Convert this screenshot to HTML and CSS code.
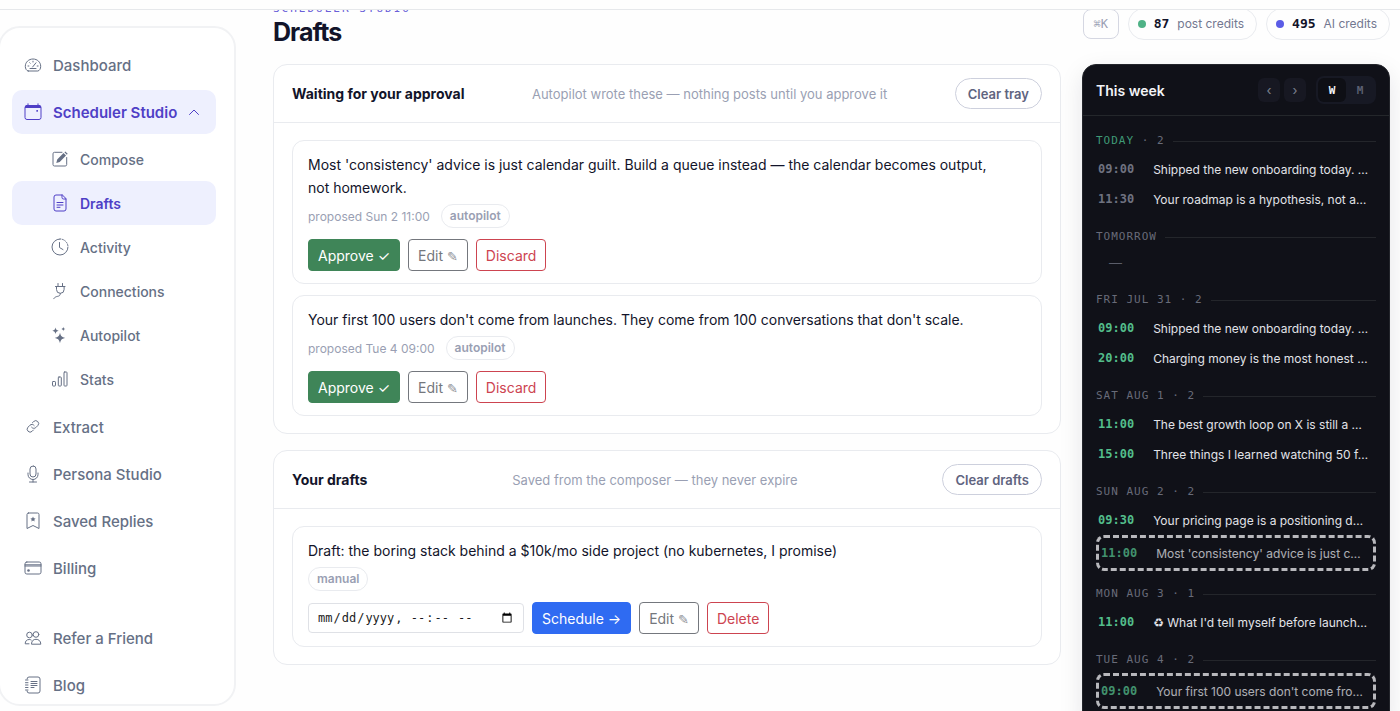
FILE: index.html
```
<!DOCTYPE html>
<html lang="en">

	<head>
		<meta charset="utf-8">
		<title>Drafts | Scheduler Studio</title>
		<meta name="viewport" content="width=device-width, initial-scale=1.0">

		<link rel="stylesheet" href="styles.css">
	</head>

	<body>

		<header class="topbar"></header>

		<div class="shell">

			<nav class="sidebar" aria-label="Main">
				<a class="nav-link" href="#dashboard">
					<svg class="icon" viewBox="0 0 18 18"><path d="M4.200 15h9.600c1.700-.2 2.900-2.300 2.900-4.700C16.700 6.200 13.300 3 9 3S1.300 6.200 1.300 10.300c0 2.400 1.200 4.500 2.900 4.700z"/><path d="M8.600 11 12 6.800M9 5.200v.8M5.700 6.700l.5.500M4 10h.9M13.200 10h.9M6 12.500h6"/></svg>
					Dashboard
				</a>
				<a class="nav-link active" href="#scheduler">
					<svg class="icon" viewBox="0 0 18 18"><rect x="1" y="2.500" width="16" height="14" rx="2"/><path class="solid" d="M1 5V4a2 2 0 0 1 2-2h12a2 2 0 0 1 2 2v1z"/><path d="M4 .8v2M14 .8v2"/><rect class="solid" x="12.300" y="7" width="1.700" height="1.700" rx=".4"/></svg>
					Scheduler Studio
					<svg class="chevron" viewBox="0 0 12 12"><path d="M1.500 8.500 6 4l4.500 4.500"/></svg>
				</a>
				<div class="subnav">
					<a class="nav-link" href="#compose">
						<svg class="icon" viewBox="0 0 18 18"><path d="M11 2.300H3.500a1.500 1.500 0 0 0-1.500 1.500v10.700A1.500 1.500 0 0 0 3.500 16h10.700a1.500 1.500 0 0 0 1.500-1.500V7.500"/><path class="solid" d="m5.300 12.900.9-3.500 6.300-6.300 2.500 2.500-6.300 6.300zM13.400 2.300l.9-.9 2.400 2.400-.9.900z"/></svg>
						Compose
					</a>
					<a class="nav-link active" href="#drafts">
						<svg class="icon" viewBox="0 0 18 18"><path d="M11 1H5a2 2 0 0 0-2 2v12a2 2 0 0 0 2 2h8a2 2 0 0 0 2-2V5z"/><path d="M11 1v2.500A1.500 1.500 0 0 0 12.500 5H15M6 8.500h6M6 11h6M6 13.300h3"/></svg>
						Drafts
					</a>
					<a class="nav-link" href="#activity">
						<svg class="icon" viewBox="0 0 18 18"><path d="M9 1a8 8 0 1 0 8 8"/><path stroke-dasharray="1 1.500" d="M9 1a8 8 0 0 1 8 8"/><path d="M8.500 4.500v5L12 11.600"/></svg>
						Activity
					</a>
					<a class="nav-link" href="#connections">
						<svg class="icon" viewBox="0 0 18 18"><path d="M7 1.500v3M11.500 1.500v3M4.500 4.500H14M5.500 4.500v3a3.800 3.800 0 0 0 7.600 0v-3M9.300 11.500c0 3-2 2.500-4 3.200-1.300.5-2 1-2.500 2"/></svg>
						Connections
					</a>
					<a class="nav-link" href="#autopilot">
						<svg class="icon" viewBox="0 0 18 18"><path class="solid" d="M9 6.800c.9 3.500 1.700 4.300 5.200 5.200-3.500.9-4.300 1.700-5.200 5.200-.9-3.500-1.700-4.300-5.200-5.200C7.300 11.100 8.100 10.300 9 6.800zM4.500 1.500c.5 2.200 1 2.700 3.200 3.300-2.200.6-2.700 1.100-3.200 3.300-.5-2.200-1-2.700-3.200-3.300 2.200-.6 2.700-1.100 3.200-3.300zM12.300.8c.3 1.400.7 1.800 2.100 2.200-1.400.4-1.800.8-2.100 2.200-.3-1.400-.7-1.800-2.100-2.200 1.400-.4 1.800-.8 2.100-2.200z"/></svg>
						Autopilot
					</a>
					<a class="nav-link" href="#stats">
						<svg class="icon" viewBox="0 0 18 18"><rect x="1.500" y="11.500" width="3" height="4.500" rx=".7"/><rect x="7.300" y="7" width="3" height="9" rx=".7"/><rect x="13" y="2" width="3" height="14" rx=".7"/></svg>
						Stats
					</a>
				</div>
				<a class="nav-link" href="#extract">
					<svg class="icon" viewBox="0 0 18 18"><path d="M7.600 9.300a2.800 2.800 0 0 0 4.200.3l2-2a2.900 2.900 0 0 0-4.100-4.100L8.400 4.800"/><path d="M10.200 7.500a2.800 2.800 0 0 0-4.200-.3L4 9.200a2.900 2.900 0 0 0 4.100 4.100l1.300-1.300"/></svg>
					Extract
				</a>
				<a class="nav-link" href="#persona">
					<svg class="icon" viewBox="0 0 18 18"><rect x="6" y="1" width="6" height="11" rx="3"/><path d="M4 8v1.500a5 5 0 0 0 10 0V8M9 14.500V17M5.500 17h7"/></svg>
					Persona Studio
				</a>
				<a class="nav-link" href="#replies">
					<svg class="icon" viewBox="0 0 18 18"><path d="M4.500 1h9A1.500 1.500 0 0 1 15 2.500V16.500l-6-3-6 3V2.500A1.500 1.500 0 0 1 4.500 1z"/><path class="solid" d="m9 4.500.8 1.700 1.800.2-1.300 1.300.3 1.800L9 8.600l-1.600.9.3-1.800-1.300-1.300 1.800-.2z"/></svg>
					Saved Replies
				</a>
				<a class="nav-link" href="#billing">
					<svg class="icon" viewBox="0 0 18 18"><rect x="1" y="3" width="16" height="12" rx="1.800"/><path d="M1 5.800h16M1 7h16"/><circle class="solid" cx="4.500" cy="11.500" r="1.300"/></svg>
					Billing
				</a>
				<a class="nav-link nav-break" href="#refer">
					<svg class="icon" viewBox="0 0 18 18"><circle cx="5.500" cy="6" r="2.800"/><circle cx="12" cy="5.500" r="2.800"/><path d="M7.500 14.800c0-3 2-4.500 4.500-4.500s4.800 1.500 4.800 4.500zM5 14.800H1.200c0-2.700 1.500-4.300 4-4.300.8 0 1.500.1 2 .5"/></svg>
					Refer a Friend
				</a>
				<a class="nav-link" href="#blog">
					<svg class="icon" viewBox="0 0 18 18"><path d="M3 3a2 2 0 0 1 2-2h9a2 2 0 0 1 2 2v12a2 2 0 0 1-2 2H5a2 2 0 0 1-2-2M1.500 4H4M1.500 6.700H4M1.500 9H4M1.500 11.500H4M1.500 14H4M7 5.500h6M7 7.500h6M7 9.500h6M7 11.500h3"/></svg>
					Blog
				</a>
			</nav>

			<main class="main">

				<div class="page-head">
					<div>
						<p class="eyebrow">SCHEDULER STUDIO</p>
						<h1>Drafts</h1>
					</div>
					<div class="credits">
						<button class="key" type="button">⌘K</button>
						<span class="chip"><i class="dot green"></i><b>87</b> post credits</span>
						<span class="chip"><i class="dot indigo"></i><b>495</b> AI credits</span>
					</div>
				</div>

				<div class="columns">

					<div class="stack">
						<section class="card">
							<div class="card-head">
								<h2>Waiting for your approval</h2>
								<p>Autopilot wrote these — nothing posts until you approve it</p>
								<button class="clear" type="button">Clear tray</button>
							</div>
							<div class="card-body">
								<article class="item">
									<p class="item-text">Most 'consistency' advice is just calendar guilt. Build a queue instead — the calendar becomes output, not homework.</p>
									<div class="meta">proposed Sun 2 11:00 <span class="tag">autopilot</span></div>
									<div class="actions">
										<button class="btn approve" type="button">Approve ✓</button>
										<button class="btn edit" type="button">Edit <span class="pencil">✎</span></button>
										<button class="btn discard" type="button">Discard</button>
									</div>
								</article>
								<article class="item">
									<p class="item-text">Your first 100 users don't come from launches. They come from 100 conversations that don't scale.</p>
									<div class="meta">proposed Tue 4 09:00 <span class="tag">autopilot</span></div>
									<div class="actions">
										<button class="btn approve" type="button">Approve ✓</button>
										<button class="btn edit" type="button">Edit <span class="pencil">✎</span></button>
										<button class="btn discard" type="button">Discard</button>
									</div>
								</article>
							</div>
						</section>

						<section class="card">
							<div class="card-head">
								<h2>Your drafts</h2>
								<p>Saved from the composer — they never expire</p>
								<button class="clear" type="button">Clear drafts</button>
							</div>
							<div class="card-body">
								<article class="item">
									<p class="item-text">Draft: the boring stack behind a $10k/mo side project (no kubernetes, I promise)</p>
									<div class="meta"><span class="tag">manual</span></div>
									<div class="actions">
										<input class="when" type="datetime-local" aria-label="Schedule">
										<button class="btn schedule" type="button">Schedule →</button>
										<button class="btn edit" type="button">Edit <span class="pencil">✎</span></button>
										<button class="btn discard" type="button">Delete</button>
									</div>
								</article>
							</div>
						</section>
					</div>

					<aside class="week">
						<div class="week-head">
							<h2>This week</h2>
							<button class="step" type="button">‹</button>
							<button class="step" type="button">›</button>
							<div class="toggle">
								<button class="on" type="button">W</button>
								<button type="button">M</button>
							</div>
						</div>

						<div class="days">
							<section class="day">
								<h3><span class="today">TODAY</span> · 2</h3>
								<div class="slot past"><time>09:00</time><span>Shipped the new onboarding today. …</span></div>
								<div class="slot past"><time>11:30</time><span>Your roadmap is a hypothesis, not a…</span></div>
							</section>
							<section class="day">
								<h3>TOMORROW</h3>
								<p class="empty">—</p>
							</section>
							<section class="day">
								<h3>FRI JUL 31 · 2</h3>
								<div class="slot"><time>09:00</time><span>Shipped the new onboarding today. …</span></div>
								<div class="slot"><time>20:00</time><span>Charging money is the most honest …</span></div>
							</section>
							<section class="day">
								<h3>SAT AUG 1 · 2</h3>
								<div class="slot"><time>11:00</time><span>The best growth loop on X is still a …</span></div>
								<div class="slot"><time>15:00</time><span>Three things I learned watching 50 f…</span></div>
							</section>
							<section class="day">
								<h3>SUN AUG 2 · 2</h3>
								<div class="slot"><time>09:30</time><span>Your pricing page is a positioning d…</span></div>
								<div class="slot proposed"><time>11:00</time><span>Most 'consistency' advice is just c…</span></div>
							</section>
							<section class="day">
								<h3>MON AUG 3 · 1</h3>
								<div class="slot"><time>11:00</time><span>♻ What I'd tell myself before launch…</span></div>
							</section>
							<section class="day">
								<h3>TUE AUG 4 · 2</h3>
								<div class="slot proposed"><time>09:00</time><span>Your first 100 users don't come fro…</span></div>
							</section>
						</div>
					</aside>

				</div>
			</main>
		</div>

	</body>
</html>
```
FILE: styles.css
```
:root {
	--sans: Inter, "Liberation Sans", "DejaVu Sans", sans-serif;
	--mono: "DejaVu Sans Mono", monospace;
	--ink: #12142a;
	--slate: #667085;
	--muted: #9a9fb3;
	--line: #e9ebef;
	--indigo: #4f3fc6;
}

* {
	box-sizing: border-box;
}

body {
	background: #fefefe;
	color: var(--ink);
	display: flex;
	flex-direction: column;
	font-family: var(--sans);
	font-size: 15px;
	height: 100vh;
	margin: 0;
	overflow: hidden;
}

h1,
h2,
h3,
p {
	margin: 0;
}

button {
	background: none;
	border: 0;
	cursor: pointer;
	font-family: inherit;
	padding: 0;
}

.topbar {
	border-bottom: 1px solid #e6e8eb;
	flex: none;
	height: 10px;
}

.shell {
	display: flex;
	flex: 1;
	min-height: 0;
}

/* Sidebar */

.sidebar {
	background: #fff;
	border: 2px solid #f1f2f4;
	border-radius: 22px;
	display: flex;
	flex: none;
	flex-direction: column;
	gap: 3px;
	margin: 16px 0 5px -2px;
	overflow: hidden;
	padding: 15px 18px 0 12px;
	width: 238px;
}

.nav-link {
	align-items: center;
	border-radius: 10px;
	color: var(--slate);
	display: flex;
	flex: none;
	font-weight: 500;
	gap: 11px;
	height: 44px;
	padding: 0 12px;
	text-decoration: none;
}

.subnav {
	display: flex;
	flex-direction: column;
	margin-bottom: 1px;
}

.subnav .nav-link {
	font-size: 14px;
	padding-left: 39px;
}

.nav-link.active {
	background: #eef0fe;
	color: var(--indigo);
	font-weight: 600;
}

.nav-break {
	margin-top: 23px;
}

.icon,
.chevron {
	fill: none;
	flex: none;
	height: 18px;
	stroke: currentColor;
	stroke-linecap: round;
	stroke-linejoin: round;
	width: 18px;
}

.icon .solid {
	fill: currentColor;
	stroke: none;
}

.chevron {
	height: 12px;
	width: 12px;
}

/* Page header */

.main {
	flex: 1;
	min-width: 0;
	overflow: hidden;
	padding: 0 10px 0 37px;
}

.page-head {
	align-items: center;
	display: flex;
	justify-content: space-between;
	margin: -9px 0 16px;
}

.eyebrow {
	color: #6a5fd8;
	font-family: var(--mono);
	font-size: 11px;
	letter-spacing: 2px;
	line-height: 16px;
}

h1 {
	font-size: 25px;
	font-weight: 700;
	letter-spacing: -1px;
	line-height: 31px;
}

.credits {
	align-items: center;
	display: flex;
	gap: 9px;
	padding-bottom: 2px;
}

.key {
	border: 1px solid #d5d7e2;
	border-radius: 8px;
	color: var(--muted);
	font-family: var(--mono);
	font-size: 12px;
	height: 30px;
	width: 36px;
}

.chip {
	align-items: center;
	border: 1px solid var(--line);
	border-radius: 16px;
	color: #737890;
	display: flex;
	font-size: 12px;
	gap: 8px;
	height: 32px;
	padding: 0 12px 0 9px;
}

.chip b {
	color: var(--ink);
	font-family: var(--mono);
	font-size: 13px;
}

.dot {
	border-radius: 50%;
	height: 8px;
	width: 8px;
}

.dot.green {
	background: #4fb286;
}

.dot.indigo {
	background: #5b5ce6;
}

.columns {
	align-items: start;
	column-gap: 21px;
	display: grid;
	grid-template-columns: minmax(0, 1fr) 308px;
}

/* Draft cards */

.stack {
	display: grid;
	gap: 16px;
}

.card {
	background: #fff;
	border: 1px solid var(--line);
	border-radius: 14px;
}

.card-head {
	align-items: center;
	border-bottom: 1px solid var(--line);
	display: flex;
	height: 58px;
	justify-content: space-between;
	padding: 0 18px;
}

.card-head h2 {
	font-size: 14px;
	font-weight: 700;
}

.card-head p {
	color: var(--muted);
	font-size: 13px;
}

.clear {
	border: 1px solid #cdd0dd;
	border-radius: 16px;
	color: #5f6480;
	font-size: 13px;
	font-weight: 600;
	height: 31px;
	padding: 0 12px;
}

.card-body {
	display: grid;
	gap: 11px;
	padding: 17px 18px;
}

.item {
	border: 1px solid var(--line);
	border-radius: 12px;
	padding: 12px 15px;
}

.item-text {
	font-size: 14px;
	line-height: 23px;
	max-width: 700px;
}

.meta {
	align-items: center;
	color: var(--muted);
	display: flex;
	font-size: 12px;
	gap: 11px;
	margin: 5px 0 11px;
}

.tag {
	border: 1px solid var(--line);
	border-radius: 12px;
	font-weight: 600;
	line-height: 22px;
	padding: 0 8px;
}

.actions {
	align-items: center;
	display: flex;
	gap: 8px;
}

.btn {
	border: 1px solid;
	border-radius: 4px;
	font-size: 14px;
	height: 32px;
	padding: 0 9px;
}

.approve {
	background: #3f8558;
	border-color: #3f8558;
	color: #fff;
}

.edit {
	color: #74777d;
}

.pencil {
	color: #8e9096;
	font-size: 13px;
}

.discard {
	color: #cd4450;
}

.schedule {
	background: #2f6bf2;
	border-color: #2f6bf2;
	color: #fff;
}

.when {
	background: #fff;
	border: 1px solid #dfe1e6;
	border-radius: 4px;
	color: #1b1c22;
	font-family: var(--mono);
	font-size: 12px;
	height: 30px;
	padding: 0 8px;
	width: 216px;
}

/* Week panel */

.week {
	background: #101118;
	border: 1px solid #23252b;
	border-radius: 14px;
	box-shadow: 0 8px 24px rgba(15, 18, 40, 0.1);
	color: #e2e3e8;
}

.week-head {
	align-items: center;
	border-bottom: 1px solid #24272b;
	display: flex;
	gap: 4px;
	height: 51px;
	padding: 0 13px;
}

.week-head h2 {
	color: #f3f4f7;
	flex: 1;
	font-size: 14px;
	font-weight: 600;
}

.step {
	background: #171822;
	border-radius: 6px;
	color: #7d8090;
	font-size: 13px;
	height: 24px;
	width: 22px;
}

.toggle {
	background: #171924;
	border-radius: 8px;
	display: flex;
	margin-left: 6px;
	padding: 2px;
}

.toggle button {
	border-radius: 6px;
	color: #5c6072;
	font-family: var(--mono);
	font-size: 11px;
	font-weight: 700;
	height: 24px;
	width: 28px;
}

.toggle .on {
	background: #0e0f15;
	color: #f3f4f7;
}

.days {
	display: grid;
	gap: 15px;
	padding: 17px 13px;
}

h3 {
	align-items: center;
	color: #686b78;
	display: flex;
	font-family: var(--mono);
	font-size: 11px;
	font-weight: 400;
	letter-spacing: 1px;
	line-height: 16px;
	margin-bottom: 5px;
	white-space: pre;
}

h3::after {
	background: #24262b;
	content: "";
	flex: 1;
	height: 1px;
	margin-left: 8px;
}

.today {
	color: #3f9a76;
}

.slot {
	align-items: center;
	border-radius: 8px;
	display: flex;
	font-size: 12px;
	gap: 19px;
	height: 30px;
	padding: 0 2px;
	white-space: nowrap;
}

.slot time {
	color: #53bd8b;
	font-family: var(--mono);
	font-weight: 700;
}

.slot.past time {
	color: #6f7280;
}

.slot.proposed {
	border: 3px dashed #f0f0f3;
	height: 36px;
	opacity: 0.75;
}

.empty {
	color: #5a5d69;
	font-size: 13px;
	line-height: 27px;
	padding-left: 13px;
}
```
